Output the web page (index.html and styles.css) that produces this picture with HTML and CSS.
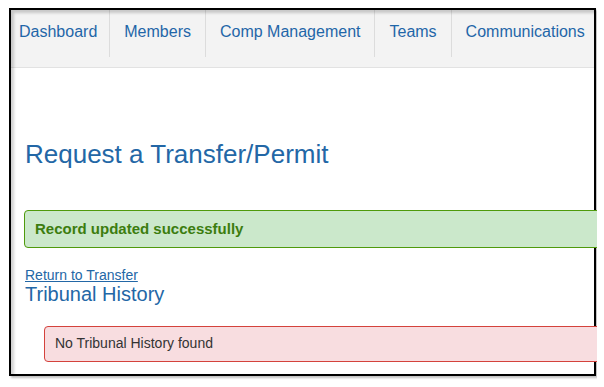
FILE: index.html
```html
<!DOCTYPE html>
<html lang="en">
<head>
    <meta charset="UTF-8">
    <meta name="viewport" content="width=device-width, initial-scale=1.0">
    <title>Request a Transfer/Permit</title>
    <link rel="stylesheet" href="styles.css">
</head>
<body>

    <div class="shot">
        <div class="window">
            <nav class="tabs">
                <a class="tab" href="#">Dashboard</a>
                <a class="tab" href="#">Members</a>
                <a class="tab" href="#">Comp Management</a>
                <a class="tab" href="#">Teams</a>
                <a class="tab" href="#">Communications</a>
            </nav>

            <div class="content">
                <h1 class="page-title">Request a Transfer/Permit</h1>

                <div class="alert alert-success">Record updated successfully</div>

                <a class="back-link" href="#">Return to Transfer</a>
                <h2 class="section-title">Tribunal History</h2>

                <div class="alert alert-danger">No Tribunal History found</div>
            </div>
        </div>
    </div>

</body>
</html>
```

FILE: styles.css
```css
body {
    margin: 0;
    font-family: "Liberation Sans", Arial, sans-serif;
    background-color: #fff;
    color: #333;
}

/* the cropped screenshot area */
.shot {
    width: 588px;
    margin-left: 9px;
    padding: 8px 0 4px;
    overflow: hidden;
}

.window {
    position: relative;
    box-sizing: border-box;
    width: 587px;
    height: 368px;
    border: 2px solid #000;
    background-color: #fff;
    box-shadow: 2px 2px 2px rgba(0, 0, 0, 0.25);
}

/* inner edge shade of the screenshot frame */
.window::after {
    content: "";
    position: absolute;
    left: 0;
    top: 0;
    right: 0;
    bottom: 0;
    box-shadow: inset 3px 3px 3px rgba(0, 0, 0, 0.18);
    pointer-events: none;
}

.tabs {
    display: flex;
    background-color: #f3f3f3;
    border-bottom: 1px solid #e2e2e2;
    padding-bottom: 10px;
    overflow: hidden;
}

.tab {
    flex-shrink: 0;
    padding: 12px 14px 15px 14px;
    font-size: 16px;
    line-height: 20px;
    color: #1f66a8;
    text-decoration: none;
    border-right: 1px solid #dcdcdc;
}
.tab:first-child {
    padding-left: 8px;
    padding-right: 12px;
}
.tab:last-child {
    border-right: none;
}

.content {
    padding: 0 0 0 13px;
}

.page-title {
    margin: 71px 0 0 1px;
    font-size: 26px;
    line-height: 30px;
    font-weight: normal;
    color: #2367a6;
}

.alert {
    box-sizing: border-box;
    border: 1px solid;
    border-radius: 4px;
    padding: 0 10px;
    margin-right: -30px;
}

.alert-success {
    margin-top: 41px;
    padding-top: 8px;
    padding-bottom: 8px;
    font-size: 15px;
    line-height: 20px;
    font-weight: bold;
    color: #3c7d0f;
    background-color: #cbe8cb;
    border-color: #4f9a0c;
}

.alert-danger {
    margin-top: 22px;
    margin-left: 20px;
    padding-top: 7px;
    padding-bottom: 9px;
    font-size: 14px;
    line-height: 18px;
    color: #333;
    background-color: #f8dde0;
    border-color: #d4423c;
}

.back-link {
    display: inline-block;
    margin: 19px 0 0 1px;
    font-size: 14px;
    line-height: 16px;
    color: #2367a6;
    text-decoration: underline;
}

.section-title {
    margin: 0 0 0 1px;
    font-size: 20px;
    line-height: 20px;
    font-weight: normal;
    color: #2367a6;
}
```
